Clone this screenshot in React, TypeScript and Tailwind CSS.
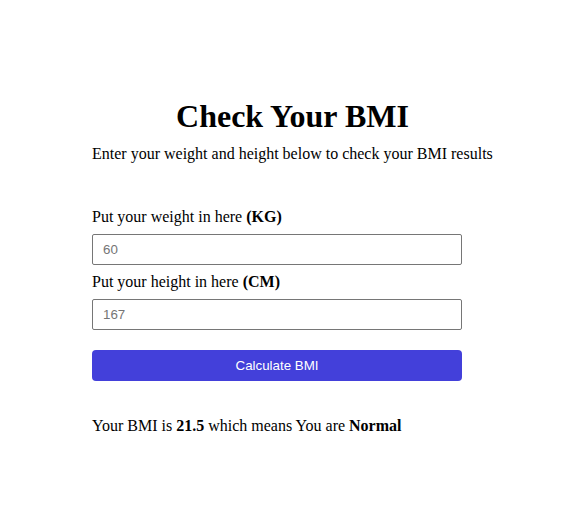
import { useState } from "react";

const serif = { fontFamily: '"Liberation Serif", "Times New Roman", serif' };

export default function App() {
  const [weight, setWeight] = useState("");
  const [height, setHeight] = useState("");

  return (
    <div className="min-h-screen bg-white text-black" style={serif}>
      <div className="ml-[92px] w-[401px] pt-[98px]">
        <h1 className="text-center text-[32px] font-bold leading-[37px]">Check Your BMI</h1>
        <p className="mt-[10px] text-[16px] leading-[18px]">
          Enter your weight and height below to check your BMI results
        </p>

        <form className="mt-[45px] w-[370px]" onSubmit={(e) => e.preventDefault()}>
          <label className="block text-[16px] leading-[18px]">
            Put your weight in here <b>(KG)</b>
          </label>
          <input
            type="text"
            value={weight}
            onChange={(e) => setWeight(e.target.value)}
            placeholder="60"
            className="mt-[8px] block h-[31px] w-full rounded-[2px] border border-[#767676] pl-[10px] text-[13.33px] text-black placeholder:text-[#757575] outline-none font-['Liberation_Sans',Arial,sans-serif]"
          />

          <label className="mt-[8px] block text-[16px] leading-[18px]">
            Put your height in here <b>(CM)</b>
          </label>
          <input
            type="text"
            value={height}
            onChange={(e) => setHeight(e.target.value)}
            placeholder="167"
            className="mt-[8px] block h-[31px] w-full rounded-[2px] border border-[#767676] pl-[10px] text-[13.33px] text-black placeholder:text-[#757575] outline-none font-['Liberation_Sans',Arial,sans-serif]"
          />

          <button
            type="submit"
            className="mt-[20px] block h-[31px] w-full rounded-[4px] bg-[#4340da] text-[13.33px] text-white font-['Liberation_Sans',Arial,sans-serif]"
          >
            Calculate BMI
          </button>
        </form>

        <p className="mt-[36px] text-[16px] leading-[18px]">
          Your BMI is <b>21.5</b> which means You are <b>Normal</b>
        </p>
      </div>
    </div>
  );
}
